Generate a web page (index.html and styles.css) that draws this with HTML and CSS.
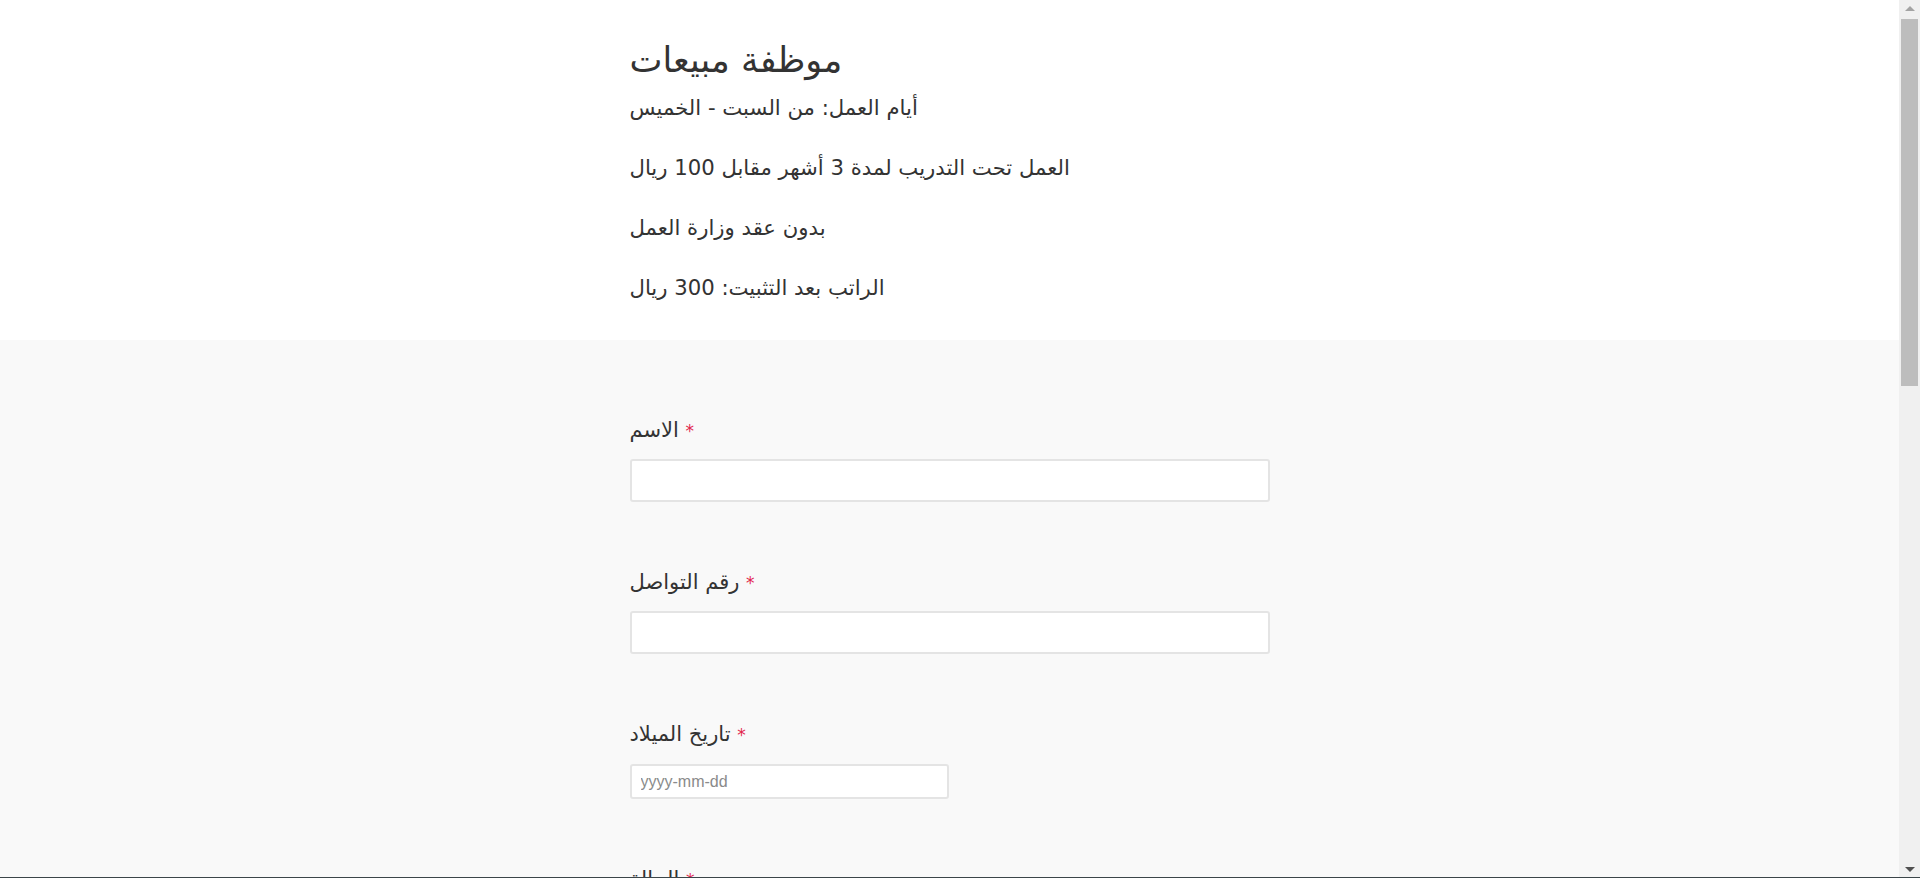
FILE: index.html
```html
<!DOCTYPE html>
<html lang="ar">
<head>
<meta charset="utf-8">
<title>موظفة مبيعات</title>
<link rel="stylesheet" href="styles.css">
</head>
<body>
<header class="intro">
  <div class="wrap">
    <h1 class="title">موظفة مبيعات</h1>
    <p class="line">أيام العمل: من السبت - الخميس</p>
    <p class="line">العمل تحت التدريب لمدة 3 أشهر مقابل 100 ريال</p>
    <p class="line">بدون عقد وزارة العمل</p>
    <p class="line">الراتب بعد التثبيت: 300 ريال</p>
  </div>
</header>
<main class="form-area">
  <form class="wrap form">
    <div class="field">
      <label class="label">الاسم <span class="req">*</span></label>
      <input class="input" type="text">
    </div>
    <div class="field">
      <label class="label">رقم التواصل <span class="req">*</span></label>
      <input class="input" type="text">
    </div>
    <div class="field">
      <label class="label">تاريخ الميلاد <span class="req">*</span></label>
      <input class="input input-date" type="text" placeholder="yyyy-mm-dd">
    </div>
    <div class="field">
      <label class="label">الحالة <span class="req">*</span></label>
      <input class="input" type="text">
    </div>
    <div class="field">
      <label class="label">المؤهل العلمي <span class="req">*</span></label>
      <input class="input" type="text">
    </div>
    <div class="field">
      <label class="label">الخبرات السابقة <span class="req">*</span></label>
      <input class="input" type="text">
    </div>
  </form>
</main>
<div class="scrollbar" aria-hidden="true">
  <span class="sb-arrow sb-up"></span>
  <span class="sb-thumb"></span>
  <span class="sb-arrow sb-down"></span>
</div>
<div class="taskbar-edge" aria-hidden="true"></div>
</body>
</html>
```
FILE: styles.css
```css
html, body {
  margin: 0;
  padding: 0;
}
html {
  overflow: hidden;
}
body {
  font-family: "Segoe UI", "DejaVu Sans", "Noto Sans", sans-serif;
  color: #333;
  background: #f9f9f9;
  padding-right: 21px;
}
.wrap {
  width: 640px;
  margin: 0 auto;
}
.intro {
  background: #fff;
  padding: 39px 0 7px;
}
.title {
  font-size: 35px;
  font-weight: 400;
  line-height: 42px;
  margin: 0 0 12px;
}
.line {
  font-size: 21.2px;
  line-height: 30px;
  margin: 0 0 30px;
}
.form-area {
  padding: 72px 0 2400px;
}
.form {
  display: flex;
  flex-direction: column;
}
.field {
  display: flex;
  flex-direction: column;
  align-items: flex-start;
  margin-bottom: 62px;
}
.label {
  font-size: 21px;
  line-height: 30px;
  padding-top: 3px;
  margin-bottom: 13px;
}
.req {
  color: #e2264d;
  font-size: 17px;
}
.input {
  box-sizing: border-box;
  width: 640px;
  height: 43px;
  border: 2px solid #e4e4e4;
  border-radius: 3px;
  background: #fff;
  font: inherit;
  font-size: 16px;
  padding: 0 9px;
  outline: none;
}
.input-date {
  width: 319px;
  height: 35px;
  margin-top: 1px;
  font-family: "Segoe UI", "Liberation Sans", sans-serif;
  font-size: 16px;
}
.input-date::placeholder {
  color: #8a8a8a;
}

/* window scrollbar drawn over the right edge */
.scrollbar {
  position: fixed;
  top: 0;
  right: 0;
  width: 21px;
  height: 100%;
  background: #f0f0f0;
}
.sb-thumb {
  position: absolute;
  top: 19px;
  left: 2px;
  width: 17px;
  height: 367px;
  background: #bdbdbd;
}
.sb-arrow {
  position: absolute;
  left: 6px;
  width: 0;
  height: 0;
  border-left: 5px solid transparent;
  border-right: 5px solid transparent;
}
.sb-up {
  top: 6px;
  border-bottom: 5px solid #a3a3a3;
}
.sb-down {
  bottom: 6px;
  border-top: 5px solid #505050;
}
.taskbar-edge {
  position: fixed;
  left: 0;
  bottom: 0;
  width: 100%;
  height: 1px;
  background: #3b4549;
}
```
